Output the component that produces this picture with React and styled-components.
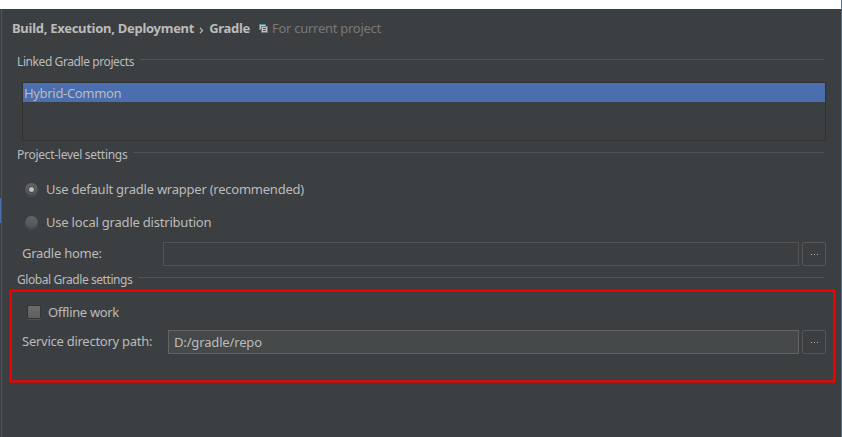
import React from 'react';
import styled, { createGlobalStyle } from 'styled-components';

const GlobalStyle = createGlobalStyle`
  body { margin: 0; background: #fff; }
  * { box-sizing: border-box; }
`;

const Frame = styled.div`
  position: relative;
  width: 842px;
  height: 437px;
  padding-top: 9px;
  border-right: 1px solid #2b7cba;
  background: #fff;
  display: flex;
  overflow: hidden;
  font-family: 'Noto Sans', 'Open Sans', sans-serif;
  font-size: 13px;
  color: #bbbbbb;
`;

const Gutter = styled.div`
  width: 2px;
  background: #3c3f41;
  border-right: 1px solid #515358;
  padding-top: 189px;
`;

const GutterMark = styled.div`
  width: 1px;
  height: 25px;
  background: #4b6eaf;
`;

const Panel = styled.main`
  flex: 1;
  background: #3c3f41;
  display: flex;
  flex-direction: column;
`;

const Text = styled.span`
  font-size: ${(p) => p.$size || 13}px;
  letter-spacing: ${(p) => p.$track || 0}px;
  line-height: 20px;
  white-space: nowrap;
`;

const Header = styled.header`
  height: 43px;
  padding: 9px 0 0 10px;
  display: flex;
  align-items: flex-start;
`;

const Crumb = styled(Text)`
  font-weight: 700;
`;

const Chevron = styled.svg`
  width: 5px;
  height: 8px;
  margin: 9px 5px 0 5px;
`;

const ScopeIcon = styled.svg`
  width: 9px;
  height: 9px;
  margin: 6px 4px 0 9px;
`;

const Hint = styled(Text)`
  color: #787878;
`;

const SectionTitle = styled.div`
  height: 20px;
  margin: ${(p) => p.$top || 0}px 17px 0 15px;
  display: flex;
  gap: 6px;
`;

const Rule = styled.div`
  flex: 1;
  height: 1px;
  margin-top: 7px;
  background: #515355;
`;

const ProjectList = styled.div`
  height: 59px;
  margin: 10px 15px 0 20px;
  border: 1px solid #323232;
`;

const ProjectItem = styled.div`
  height: 19px;
  padding-left: 1px;
  background: #4b6eaf;
  display: flex;
  align-items: flex-start;
`;

const Choice = styled.label`
  height: 20px;
  margin-top: ${(p) => p.$top}px;
  padding-left: ${(p) => p.$left}px;
  display: flex;
  gap: ${(p) => p.$gap}px;
`;

const RadioMark = styled.svg`
  width: 15px;
  height: 15px;
  margin-top: 3px;
`;

const CheckMark = styled.span`
  width: 14px;
  height: 14px;
  margin-top: 3px;
  border: 1px solid #333537;
  border-radius: 2px;
  background: linear-gradient(#6c6c6c, #5f5f5f);
  box-shadow: 0 1px 0 #505254;
`;

const Field = styled.div`
  height: 24px;
  margin: ${(p) => p.$top}px 15px 0 20px;
  display: flex;
  align-items: center;
`;

const FieldLabel = styled.div`
  width: ${(p) => p.$width}px;
  height: 22px;
  display: flex;
`;

const Input = styled.div`
  flex: 1;
  height: 24px;
  padding: 0 0 1px 5px;
  display: flex;
  align-items: center;
  border: 1px solid ${(p) => (p.$filled ? '#646464' : '#515355')};
  background: ${(p) => (p.$filled ? '#45494a' : '#3c3f41')};
`;

const Browse = styled.button`
  width: 24px;
  height: 24px;
  margin-left: 3px;
  padding: 0 0 0 1px;
  border: 1px solid #555758;
  border-radius: 2px;
  background: #3c3f41;
  display: flex;
  align-items: center;
  justify-content: center;
`;

const Highlight = styled.div`
  position: absolute;
  left: 9px;
  top: 289px;
  width: 827px;
  height: 94px;
  border: 1px solid #a81515;
  box-shadow: inset 0 0 0 1px #ff0000, inset 0 0 0 2px #d00a0a;
`;

function Radio({ checked }) {
  return (
    <RadioMark viewBox="0 0 15 15">
      <defs>
        <linearGradient id="radioFill" x1="0" y1="0" x2="0" y2="1">
          <stop offset="0" stopColor="#636668" />
          <stop offset="1" stopColor="#505355" />
        </linearGradient>
      </defs>
      <circle cx="7.5" cy="8" r="6.9" fill="#505355" />
      <circle cx="7.5" cy="7.2" r="6.7" fill="url(#radioFill)" stroke="#343638" strokeWidth=".7" />
      {checked && <circle cx="7.5" cy="7.5" r="3.2" fill="#404345" />}
      {checked && <circle cx="7.5" cy="7.5" r="2.5" fill="#bdbdbd" />}
    </RadioMark>
  );
}

function BrowseButton() {
  return (
    <Browse aria-label="Browse">
      <svg width="7" height="1" viewBox="0 0 7 1" fill="#bbbbbb" shapeRendering="crispEdges">
        <rect x="0" width="1" height="1" />
        <rect x="3" width="1" height="1" />
        <rect x="6" width="1" height="1" />
      </svg>
    </Browse>
  );
}

function Section({ title, top, track }) {
  return (
    <SectionTitle $top={top}>
      <Text $size={12} $track={track}>{title}</Text>
      <Rule />
    </SectionTitle>
  );
}

export default function App() {
  return (
    <>
      <GlobalStyle />
      <Frame>
        <Gutter><GutterMark /></Gutter>
        <Panel>
          <Header>
            <Crumb $track={-0.28}>Build, Execution, Deployment</Crumb>
            <Chevron viewBox="0 0 5 8" fill="none" stroke="#bbbbbb" strokeWidth="1.1">
              <path d="M1 1 L3.6 3.5 L1 6" />
            </Chevron>
            <Crumb $track={-0.3}>Gradle</Crumb>
            <ScopeIcon viewBox="0 0 9 9" shapeRendering="crispEdges">
              <path d="M0 0h7v2H2v4H0z" fill="#5090ae" />
              <path d="M1 1h5v1H2v3H1z" fill="#b8cad2" />
              <path d="M2 2h7v7H2z" fill="#777a7b" />
              <path d="M3 3h5v5H3z" fill="#c4c4c4" />
              <path d="M4 4h3v1H4zM4 6h3v1H4z" fill="#4b4e50" />
            </ScopeIcon>
            <Hint $track={-0.27}>For current project</Hint>
          </Header>

          <Section title="Linked Gradle projects" track={-0.41} />
          <ProjectList>
            <ProjectItem><Text $track={-0.32}>Hybrid-Common</Text></ProjectItem>
          </ProjectList>

          <Section title="Project-level settings" top={4} track={-0.28} />
          <Choice $top={14} $left={22} $gap={7}>
            <Radio checked />
            <Text $track={-0.24}>Use default gradle wrapper (recommended)</Text>
          </Choice>
          <Choice $top={13} $left={22} $gap={7}>
            <Radio />
            <Text $track={-0.21}>Use local gradle distribution</Text>
          </Choice>
          <Field $top={10}>
            <FieldLabel $width={141}><Text $track={-0.25}>Gradle home:</Text></FieldLabel>
            <Input />
            <BrowseButton />
          </Field>

          <Section title="Global Gradle settings" top={4} track={-0.43} />
          <Choice $top={12} $left={25} $gap={7}>
            <CheckMark />
            <Text $track={-0.33}>Offline work</Text>
          </Choice>
          <Field $top={8}>
            <FieldLabel $width={146}><Text $track={-0.26}>Service directory path:</Text></FieldLabel>
            <Input $filled><Text $track={-0.15}>D:/gradle/repo</Text></Input>
            <BrowseButton />
          </Field>
        </Panel>
        <Highlight />
      </Frame>
    </>
  );
}
